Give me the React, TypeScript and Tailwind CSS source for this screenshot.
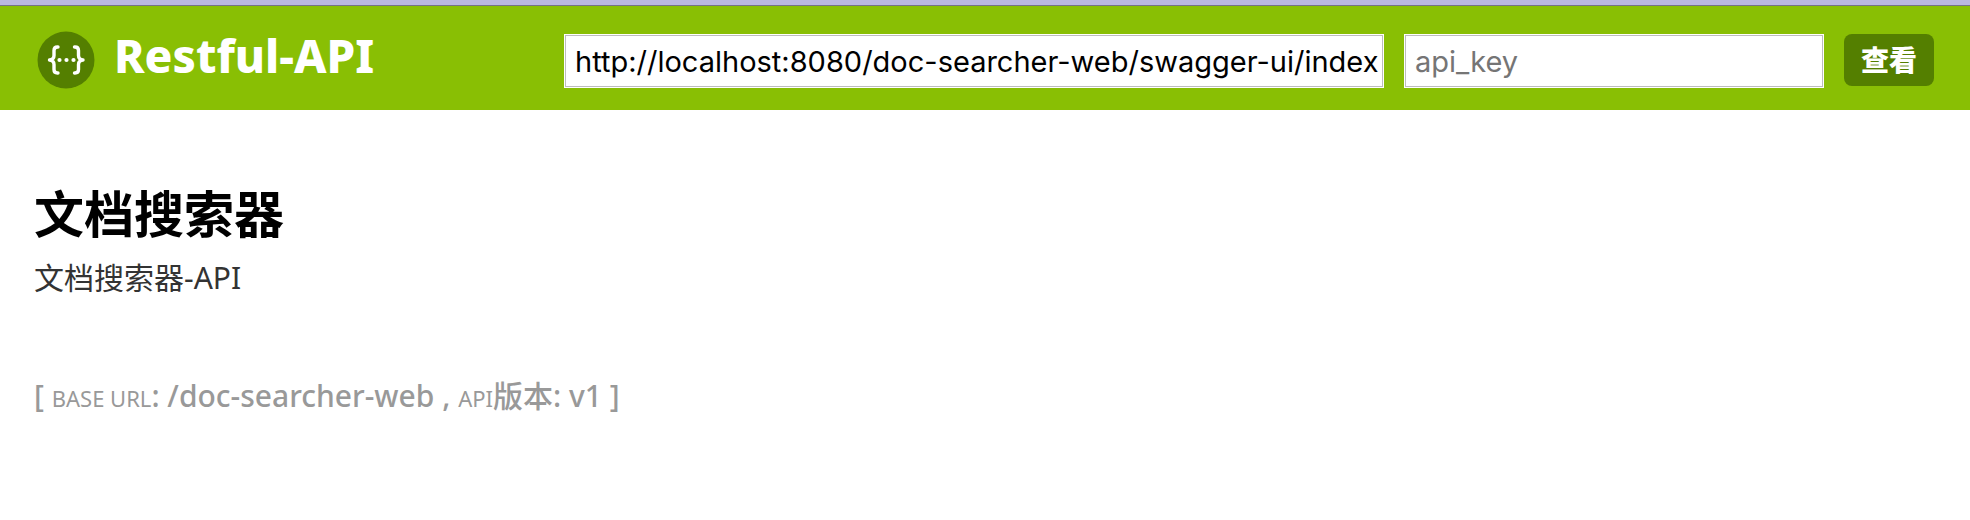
function Logo() {
  return (
    <svg viewBox="0 0 60 60" className="size-[60px] shrink-0" aria-hidden="true">
      <circle cx="30" cy="30" r="28.5" fill="#547f00" />
      <g fill="none" stroke="#fff" strokeWidth="3.4" strokeLinecap="round" strokeLinejoin="round">
        <path d="M22 17h-.5q-3.500 0-3.500 3.500v5q0 4-4.500 4.500 4.500.5 4.500 4.500v5q0 3.500 3.500 3.500h.5" />
        <path d="M38.500 17h.5q3.500 0 3.500 3.500v5q0 4 4.500 4.500-4.500.5-4.500 4.500v5q0 3.500-3.500 3.500h-.5" />
      </g>
      <g fill="#fff">
        <circle cx="23.500" cy="30" r="2.100" />
        <circle cx="30.500" cy="30" r="2.100" />
        <circle cx="37.500" cy="30" r="2.100" />
      </g>
    </svg>
  );
}

const field =
  "h-[54px] min-w-0 border border-white bg-white pr-1 pl-[10px] font-['Inter','Noto_Sans_CJK_SC',sans-serif] text-[29px] text-black inset-ring-1 inset-ring-[#bdbdbd] placeholder:text-[#757575]";

export default function App() {
  return (
    <div className="min-h-screen bg-white font-['Noto_Sans','Noto_Sans_CJK_SC',sans-serif]">
      <div className="h-[5px] bg-[#bab8df]" />
      <header className="flex items-start justify-between gap-5 border-t border-[#757286] bg-[#89bf04] px-9 pt-6 pb-5">
        <a href="#" className="flex items-start gap-[18px] text-white">
          <Logo />
          <span className="text-[46px] leading-[50px] font-extrabold whitespace-nowrap">Restful-API</span>
        </a>
        <form className="flex min-w-0 items-start gap-5 pt-1" onSubmit={(e) => e.preventDefault()}>
          <input
            type="text"
            aria-label="URL"
            defaultValue="http://localhost:8080/doc-searcher-web/swagger-ui/index"
            className={`${field} w-[820px]`}
          />
          <input type="text" aria-label="api_key" placeholder="api_key" className={`${field} w-[420px]`} />
          <button
            type="submit"
            className="h-[52px] w-[90px] shrink-0 rounded-lg bg-[#547f00] text-[28px] leading-none font-black text-white"
          >
            查看
          </button>
        </form>
      </header>
      <main className="px-[34px] pt-[74px]">
        <h1 className="text-[50px] leading-[60px] font-bold text-black">文档搜索器</h1>
        <p className="mt-[14px] text-[30px] leading-[40px] text-[#333333]">文档搜索器-API</p>
        <p className="mt-[78px] text-[30px] leading-[40px] font-medium text-[#999999]">
          [ <span className="text-[22px] font-normal uppercase">base url</span>: /doc-searcher-web ,{" "}
          <span className="text-[22px] font-normal uppercase">api</span>版本: v1 ]
        </p>
      </main>
    </div>
  );
}
